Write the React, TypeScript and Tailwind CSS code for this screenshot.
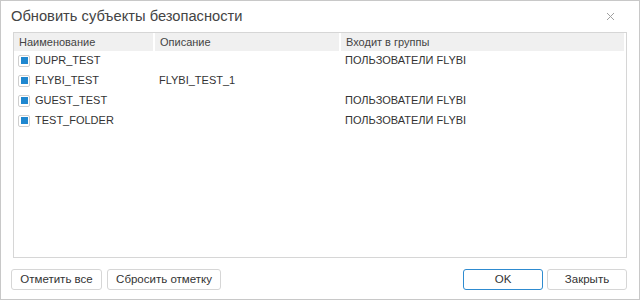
import React from "react";

interface Row {
  name: string;
  description: string;
  groups: string;
}

const rows: Row[] = [
  { name: "DUPR_TEST", description: "", groups: "ПОЛЬЗОВАТЕЛИ FLYBI" },
  { name: "FLYBI_TEST", description: "FLYBI_TEST_1", groups: "" },
  { name: "GUEST_TEST", description: "", groups: "ПОЛЬЗОВАТЕЛИ FLYBI" },
  { name: "TEST_FOLDER", description: "", groups: "ПОЛЬЗОВАТЕЛИ FLYBI" },
];

const Checkbox = () => (
  <span className="flex h-[12px] w-[12px] items-center justify-center rounded-[2px] border border-[#cfcfcf] bg-white">
    <span className="h-[7px] w-[7px] bg-[#1f87cf]" />
  </span>
);

const Button = ({ label, width, primary }: { label: string; width: string; primary?: boolean }) => (
  <button
    className={
      primary
        ? `${width} h-[21px] rounded-[3px] border border-[#2e8bd0] bg-white text-[11.5px] text-[#333]`
        : `${width} h-[21px] rounded-[3px] border border-[#d6d6d6] bg-white text-[11.5px] text-[#333]`
    }
  >
    {label}
  </button>
);

export default function App() {
  return (
    <div
      className="flex h-[300px] w-[640px] flex-col border border-[#c8c8c8] bg-white"
      style={{ fontFamily: '"Liberation Sans", Arial, sans-serif' }}
    >
      <div className="flex h-[31px] items-center justify-between pl-[10px] pr-[24px]">
        <span className="text-[14.7px] text-[#444]">Обновить субъекты безопасности</span>
        <svg width="9" height="9" viewBox="0 0 9 9" className="text-[#a0a0a0]">
          <path d="M1 1L8 8M8 1L1 8" stroke="currentColor" strokeWidth="1" />
        </svg>
      </div>

      <div className="mx-[12px] h-[226px] border border-[#d6d6d6] text-[11px]">
        <div className="mr-[2px] flex h-[18px] items-center bg-[#f0f0f0] text-[#444]">
          <div className="w-[139px] pl-[5px]">Наименование</div>
          <div className="h-full w-[2px] bg-white" />
          <div className="w-[184px] pl-[5px]">Описание</div>
          <div className="h-full w-[2px] bg-white" />
          <div className="flex-1 pl-[5px]">Входит в группы</div>
        </div>
        {rows.map((r) => (
          <div key={r.name} className="flex h-[20px] items-center pb-[1px] text-[#333]">
            <div className="flex w-[141px] items-center gap-[5px] pl-[4px]">
              <Checkbox />
              <span>{r.name}</span>
            </div>
            <div className="w-[186px] pl-[4px]">{r.description}</div>
            <div className="flex-1 pl-[4px]">{r.groups}</div>
          </div>
        ))}
      </div>

      <div className="mt-[11px] flex items-center justify-between px-[10px]">
        <div className="flex gap-[5px]">
          <Button label="Отметить все" width="w-[91px]" />
          <Button label="Сбросить отметку" width="w-[114px]" />
        </div>
        <div className="flex gap-[4px] pr-[2px]">
          <Button label="OK" width="w-[80px]" primary />
          <Button label="Закрыть" width="w-[80px]" />
        </div>
      </div>
    </div>
  );
}
